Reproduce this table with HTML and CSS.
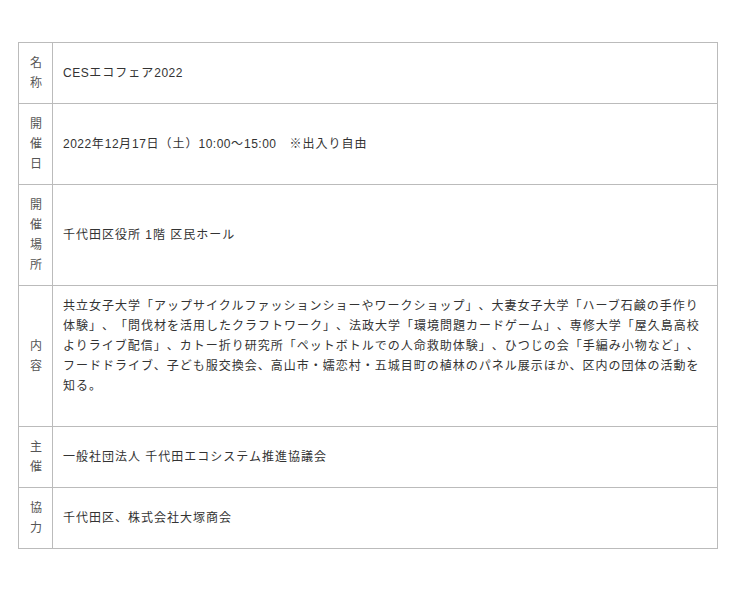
FILE: index.html
```html
<!DOCTYPE html>
<html lang="ja">
<head>
<meta charset="utf-8">
<link rel="stylesheet" href="styles.css">
</head>
<body>
<div class="page">
<table class="info">
<tr><th>名称</th><td><span class="lat">CES</span>エコフェア<span class="lat">2022</span></td></tr>
<tr><th>開催日</th><td><span class="lat">2022</span>年<span class="lat">12</span>月<span class="lat">17</span>日（土）<span class="lat">10:00</span>〜<span class="lat">15:00</span>　※出入り自由</td></tr>
<tr><th>開催場所</th><td>千代田区役所 1階 区民ホール</td></tr>
<tr><th>内容</th><td class="long">共立女子大学「アップサイクルファッションショーやワークショップ」、大妻女子大学「ハーブ石鹸の手作り<br>体験」、「問伐材を活用したクラフトワーク」、法政大学「環境問題カードゲーム」、専修大学「屋久島高校<br>よりライブ配信」、カトー折り研究所「ペットボトルでの人命救助体験」、ひつじの会「手編み小物など」、<br>フードドライブ、子ども服交換会、高山市・嬬恋村・五城目町の植林のパネル展示ほか、区内の団体の活動を<br>知る。<br><br></td></tr>
<tr><th>主催</th><td>一般社団法人 千代田エコシステム推進協議会</td></tr>
<tr><th>協力</th><td>千代田区、株式会社大塚商会</td></tr>
</table>
</div>
</body>
</html>
```

FILE: styles.css
```css
html, body {
  margin: 0;
  padding: 0;
  background: #fff;
}
.page {
  padding: 42px 22px 0 18px;
}
.info {
  width: 700px;
  border-collapse: collapse;
  font-family: "Liberation Sans", "Noto Sans CJK JP", sans-serif;
  font-size: 12px;
  line-height: 20px;
  color: #333;
  text-spacing-trim: space-all;
}
.info th,
.info td {
  border: 1px solid #bbb;
  padding: 10px;
  vertical-align: middle;
  text-align: left;
}
.info th {
  width: 14px;
  padding: 10px 9px 10px 10px;
  font-weight: normal;
  color: #555;
  text-align: center;
  word-break: break-all;
}
.info td {
  letter-spacing: 1px;
}
.info .lat {
  letter-spacing: 0.5px;
}
.info .long {
  white-space: nowrap;
}
```
